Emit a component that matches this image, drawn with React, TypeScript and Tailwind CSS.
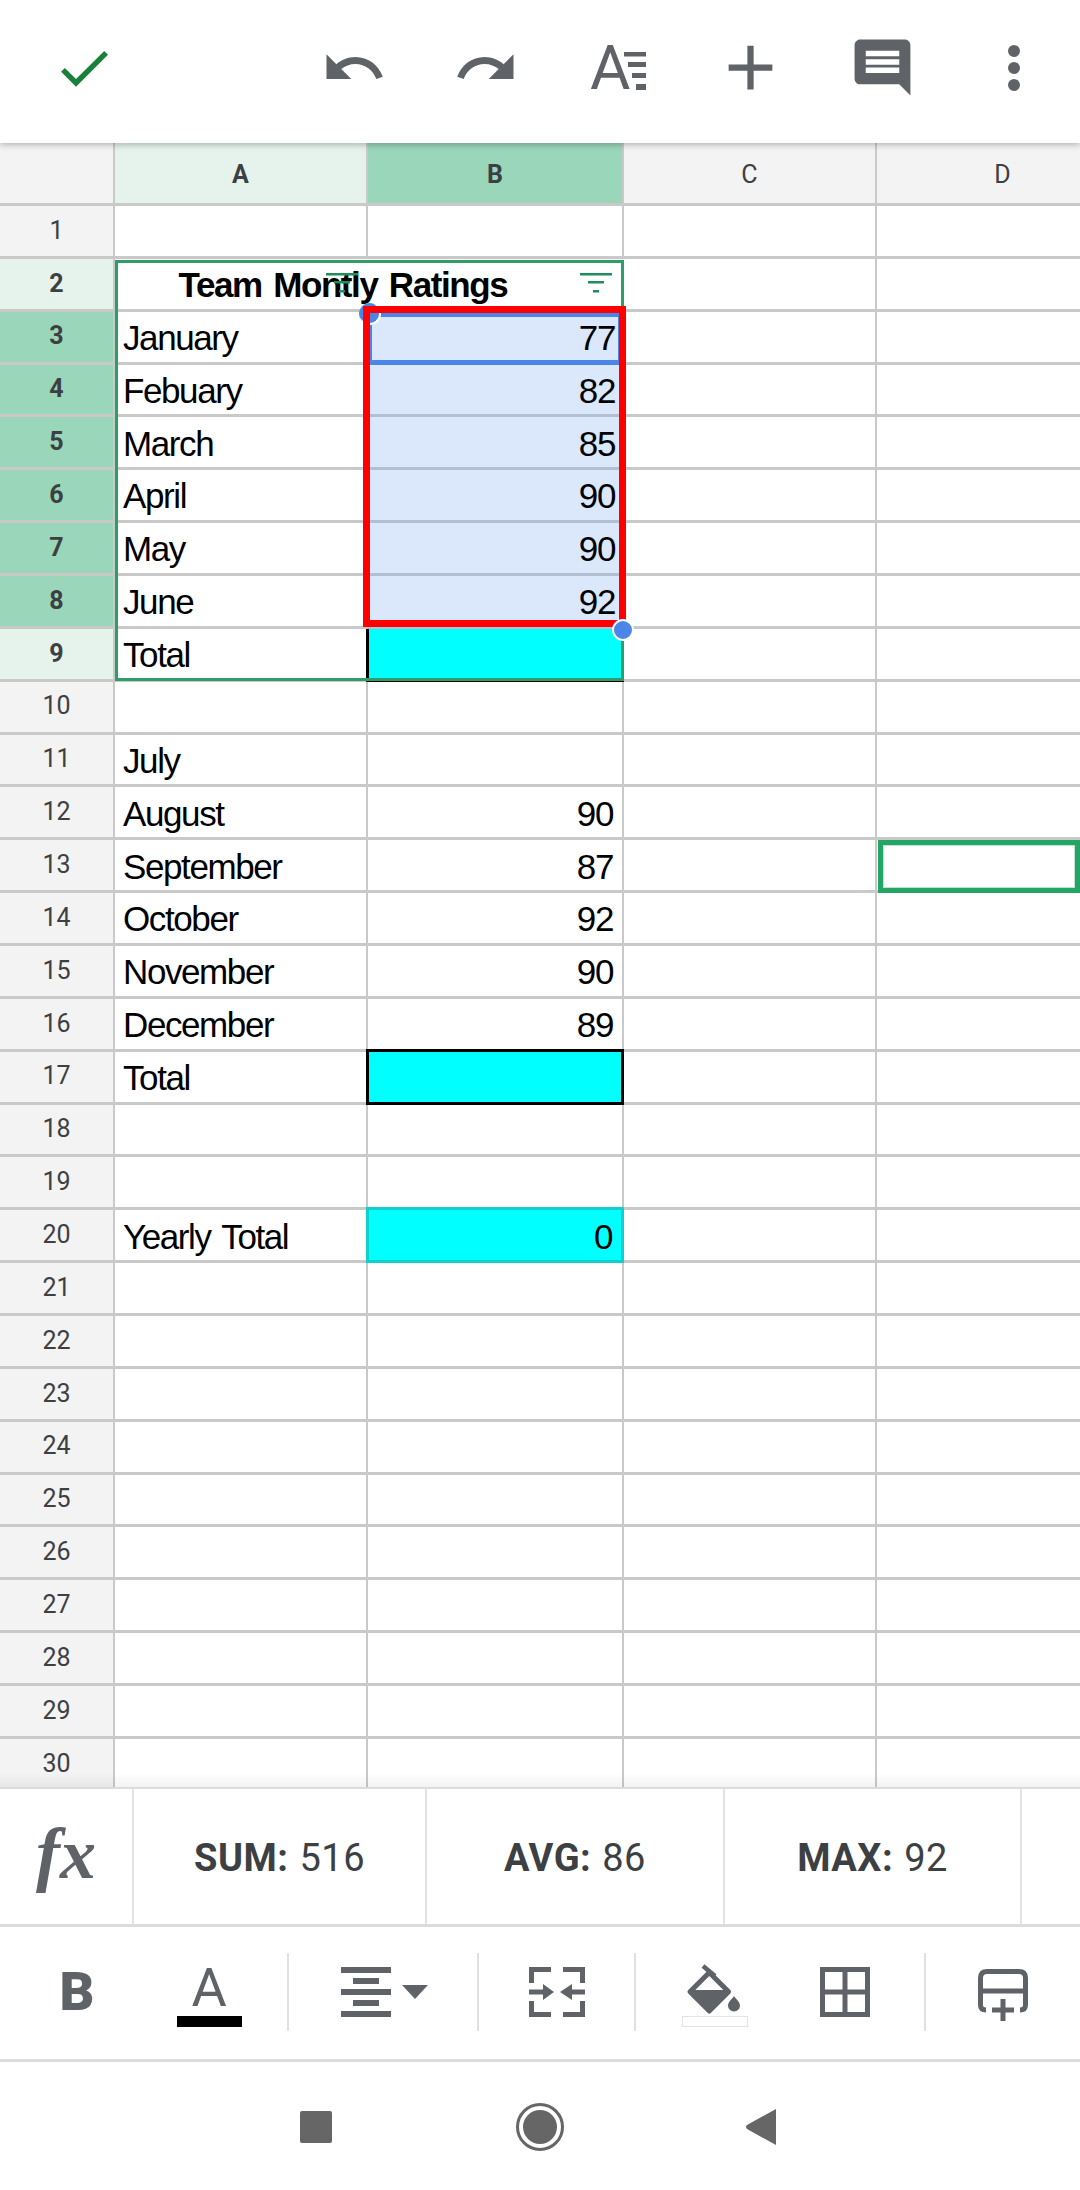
import React from "react";

type RowData = {
  n: number;
  label?: string;
  value?: string;
  head?: "light" | "dark";
  b?: "sel" | "black" | "blackOpen" | "teal";
};

const months: Record<number, Partial<RowData>> = {
  2: { head: "light" },
  3: { label: "January", value: "77", head: "dark", b: "sel" },
  4: { label: "Febuary", value: "82", head: "dark", b: "sel" },
  5: { label: "March", value: "85", head: "dark", b: "sel" },
  6: { label: "April", value: "90", head: "dark", b: "sel" },
  7: { label: "May", value: "90", head: "dark", b: "sel" },
  8: { label: "June", value: "92", head: "dark", b: "sel" },
  9: { label: "Total", head: "light", b: "blackOpen" },
  11: { label: "July" },
  12: { label: "August", value: "90" },
  13: { label: "September", value: "87" },
  14: { label: "October", value: "92" },
  15: { label: "November", value: "90" },
  16: { label: "December", value: "89" },
  17: { label: "Total", b: "black" },
  20: { label: "Yearly Total", value: "0", b: "teal" },
};

const rows: RowData[] = Array.from({ length: 30 }, (_, i) => ({ n: i + 1, ...months[i + 1] }));

const cellFont = "font-['Liberation_Sans',Arial,sans-serif] text-[35px] tracking-[-1.4px] [word-spacing:3px] text-black";

function FilterIcon() {
  return (
    <svg width="32" height="22" viewBox="0 0 32 22" fill="#1e8e5a">
      <rect x="0" y="0" width="32" height="2.5" />
      <rect x="8" y="8" width="16" height="2.5" />
      <rect x="13" y="17" width="6" height="2.5" />
    </svg>
  );
}

function IconPath({ d, size, fill = "#5f6368" }: { d: string; size: number; fill?: string }) {
  return (
    <svg width={size} height={size} viewBox="0 0 24 24" fill={fill}>
      <path d={d} />
    </svg>
  );
}

function TopBar() {
  const cell = "w-[132px] flex items-center justify-center";
  return (
    <div className="relative z-20 h-[143px] bg-white flex items-center pb-[8px] shadow-[0_2px_6px_rgba(0,0,0,0.25)]">
      <div className="ml-[52px]">
        <IconPath size={64} fill="#188038" d="M9 16.17L4.83 12l-1.42 1.41L9 19 21 7l-1.41-1.41z" />
      </div>
      <div className="ml-auto flex items-center">
        <div className={cell}>
          <IconPath size={66} d="M12.5 8c-2.65 0-5.05.99-6.9 2.6L2 7v9h9l-3.62-3.62c1.39-1.16 3.16-1.88 5.12-1.88 3.54 0 6.55 2.31 7.6 5.5l2.37-.78C21.08 11.03 17.15 8 12.5 8z" />
        </div>
        <div className={cell}>
          <IconPath size={66} d="M18.4 10.6C16.55 8.99 14.15 8 11.5 8c-4.65 0-8.58 3.03-9.96 7.22L3.9 16c1.05-3.19 4.05-5.5 7.6-5.5 1.95 0 3.73.72 5.12 1.88L13 16h9V7l-3.6 3.6z" />
        </div>
        <div className={cell}>
          <div className="relative w-[56px] h-[44px]">
            <span className="block font-['Roboto',sans-serif] text-[62px] leading-[44px] text-[#5f6368]">A</span>
            <svg className="absolute left-0 top-0" width="56" height="44" viewBox="0 0 56 44" fill="#5f6368">
              <rect x="34" y="6" width="22" height="4.5" />
              <rect x="38" y="16" width="18" height="5" />
              <rect x="42" y="27" width="14" height="5" />
              <rect x="46" y="38" width="10" height="6" />
            </svg>
          </div>
        </div>
        <div className={cell}>
          <IconPath size={75} d="M19 13h-6v6h-2v-6H5v-2h6V5h2v6h6v2z" />
        </div>
        <div className={cell}>
          <IconPath size={67} d="M21.99 4c0-1.1-.89-2-1.99-2H4c-1.1 0-2 .9-2 2v12c0 1.1.9 2 2 2h14l4 4-.01-18zM18 14H6v-2h12v2zm0-3H6V9h12v2zm0-3H6V6h12v2z" />
        </div>
        <div className={cell}>
          <svg width="14" height="46" viewBox="0 0 14 46" fill="#5f6368">
            <circle cx="7" cy="6" r="6" />
            <circle cx="7" cy="23" r="6" />
            <circle cx="7" cy="40" r="6" />
          </svg>
        </div>
      </div>
    </div>
  );
}

function ColHeader() {
  const base = "h-full flex items-center justify-center border-b-[3px] border-r-2 border-[#c9c9c9] font-['Roboto',sans-serif] text-[25px] pt-[4px] text-[#3c4043]";
  return (
    <div className="h-[63px] w-[1130px] flex bg-[#f3f3f3]">
      <div className={`${base} w-[115px]`} />
      <div className={`${base} w-[253px] bg-[#e5f3ec] font-bold`}>A</div>
      <div className={`${base} w-[256px] bg-[#9ad6b9] font-bold`}>B</div>
      <div className={`${base} w-[253px]`}>C</div>
      <div className={`${base} w-[253px] border-r-0`}>D</div>
    </div>
  );
}

function Row({ row }: { row: RowData }) {
  const line = "border-b-[3px] border-[#c9c9c9]";
  const headBg = row.head === "dark" ? "bg-[#9ad6b9] font-bold" : row.head === "light" ? "bg-[#e5f3ec] font-bold" : "bg-[#f3f3f3]";
  let bCell = "w-[256px] bg-white border-r-2 border-[#c9c9c9] " + line;
  if (row.b === "sel") bCell = "w-[256px] bg-[#dbe7fb] border-b-[3px] border-[#b3bfd3]";
  if (row.b === "black") bCell = "w-[258px] -ml-[2px] bg-[#00ffff] border-[3px] border-black -mt-[3px] h-[calc(100%+3px)]";
  if (row.b === "blackOpen") bCell = "w-[258px] -ml-[2px] bg-[#00ffff] border-l-[3px] border-b-[3px] border-black";
  if (row.b === "teal") bCell = "w-[258px] -ml-[2px] bg-[#00ffff] border-[3px] border-[#12cfcf] -mt-[3px] h-[calc(100%+3px)]";

  return (
    <div className="h-[52.87px] w-[1130px] flex">
      <div className={`w-[115px] flex items-center justify-center border-r-2 border-[#c9c9c9] font-['Roboto',sans-serif] text-[25px] text-[#3c4043] pb-[1px] ${line} ${headBg}`}>
        {row.n}
      </div>
      {row.n === 2 ? (
        <div className={`w-[509px] relative flex items-center justify-center font-bold ${cellFont} ${line}`}>
          <span className="mr-[53px] pt-[2px]">Team Montly Ratings</span>
          <div className="absolute left-[211px] top-[14px]"><FilterIcon /></div>
          <div className="absolute left-[465px] top-[14px]"><FilterIcon /></div>
        </div>
      ) : (
        <>
          <div className={`w-[253px] flex items-center pl-[8px] pt-[3px] border-r-2 border-[#c9c9c9] ${cellFont} ${line}`}>
            {row.label}
          </div>
          <div className={`flex items-center justify-end pr-[9px] pt-[3px] ${cellFont} tracking-[-0.8px] ${bCell}`}>
            {row.value}
          </div>
        </>
      )}
      <div className={`w-[253px] border-r-2 border-[#c9c9c9] ${line}`} />
      <div className={`w-[253px] ${line}`} />
    </div>
  );
}

function Sheet() {
  return (
    <div className="relative h-[1644px] overflow-hidden bg-white">
      <ColHeader />
      {rows.map((r) => (
        <Row key={r.n} row={r} />
      ))}

      {/* selection and outlines over the grid */}
      <div className="absolute left-[115px] top-[117px] w-[509px] h-[421px] border-[3px] border-[#2e9e68] pointer-events-none" />
      <div className="absolute left-[367px] top-[169px] w-[256px] h-[53px] border-[5px] border-[#4a86e8]" />
      <div className="absolute left-[359px] top-[160px] w-[22px] h-[22px] rounded-full bg-[#4a86e8] border-r-2 border-b-2 border-white" />
      <div className="absolute left-[363px] top-[163px] w-[263px] h-[321px] border-[7px] border-[#ff0000]" />
      <div className="absolute left-[612px] top-[476px] w-[22px] h-[22px] rounded-full bg-[#4a86e8] border-2 border-white" />
      <div className="absolute left-[878px] top-[697px] w-[202px] h-[53px] border-[5px] border-[#22a565] outline outline-1 -outline-offset-6 outline-[#bfe5d0]" />

      <div className="absolute left-0 right-0 bottom-0 h-[14px] bg-gradient-to-b from-transparent to-black/5" />
    </div>
  );
}

function StatCell({ name, value, width }: { name: string; value: string; width: string }) {
  return (
    <div className={`${width} h-full flex items-center justify-center border-r-2 border-[#e3e3e3] font-['Roboto',sans-serif] text-[38px] tracking-[0.5px] text-[#3c4043] pt-[3px]`}>
      <span className="font-bold">{name}:</span>
      <span className="ml-[11px]">{value}</span>
    </div>
  );
}

function StatStrip() {
  return (
    <div className="h-[140px] flex bg-white border-t-2 border-b-[3px] border-[#dcdce0]">
      <div className="w-[134px] h-full flex items-center justify-center border-r-2 border-[#e3e3e3] font-['Liberation_Serif',serif] italic font-bold text-[72px] text-[#5f6368] pb-[6px]">
        fx
      </div>
      <StatCell name="SUM" value="516" width="w-[293px]" />
      <StatCell name="AVG" value="86" width="w-[298px]" />
      <StatCell name="MAX" value="92" width="w-[297px]" />
    </div>
  );
}

function Divider() {
  return <div className="w-[2px] h-[78px] bg-[#e0e0e0]" />;
}

function FormatBar() {
  return (
    <div className="h-[135px] flex items-center bg-white border-b-[3px] border-[#dcdce0] pb-[3px]">
      <div className="w-[154px] flex justify-center font-['Roboto',sans-serif] font-black text-[54px] leading-none text-[#5f6368]">B</div>
      <div className="w-[110px] flex flex-col items-center pt-[6px]">
        <span className="font-['Roboto',sans-serif] text-[54px] leading-[50px] text-[#5f6368]">A</span>
        <div className="w-[65px] h-[11px] bg-black mt-[3px]" />
      </div>
      <div className="w-[23px]" />
      <Divider />
      <div className="w-[188px] flex items-center justify-center gap-[11px] pl-[2px]">
        <svg width="50" height="50" viewBox="0 0 50 50" fill="#5f6368">
          <rect x="0" y="0" width="50" height="6" />
          <rect x="12" y="11" width="26" height="6" />
          <rect x="0" y="22" width="50" height="6" />
          <rect x="12" y="33" width="26" height="6" />
          <rect x="0" y="44" width="50" height="6" />
        </svg>
        <svg width="26" height="14" viewBox="0 0 26 14" fill="#5f6368">
          <path d="M0 0h26L13 14z" />
        </svg>
      </div>
      <Divider />
      <div className="w-[155px] flex justify-center">
        <svg width="56" height="50" viewBox="0 0 56 50" fill="#5f6368">
          <path d="M0 0h22v5H5v11H0zM34 0h22v16h-5V5H34zM0 34h5v11h17v5H0zM51 34h5v16H34v-5h17z" />
          <path d="M0 22.5h14V17l11 8-11 8v-5.5H0zM56 22.5H43V17l-12 8 12 8v-5.5h13z" />
        </svg>
      </div>
      <Divider />
      <div className="w-[288px] flex items-center">
        <div className="w-[158px] flex justify-center pt-[3px]">
          <svg width="66" height="67" viewBox="0 0 66 67" fill="#5f6368">
            <path d="M8 31.7L27.3 12.4 46.6 31.7 27.3 51z" fill="none" stroke="#5f6368" strokeWidth="5" strokeLinejoin="round" />
            <path d="M8 31h38.6L27.3 51z" stroke="#5f6368" strokeWidth="2" strokeLinejoin="round" />
            <path d="M21 6l12 10" fill="none" stroke="#5f6368" strokeWidth="4.5" />
            <path d="M52 36c2 3 6 6 6 9.5a6 6 0 0 1-12 0c0-3.5 4-6.5 6-9.5z" />
            <rect x="0.5" y="56.5" width="65" height="10" fill="none" stroke="#e3e3e3" />
          </svg>
        </div>
        <div className="w-[102px] flex justify-center">
          <svg width="50" height="50" viewBox="0 0 50 50" fill="none" stroke="#5f6368" strokeWidth="5">
            <path d="M2.5 2.5h45v45h-45zM25 2.5v45M2.5 25h45" />
          </svg>
        </div>
      </div>
      <Divider />
      <div className="flex-1 flex justify-center pt-[6px]">
        <svg width="50" height="52" viewBox="0 0 50 52" fill="none" stroke="#5f6368" strokeWidth="5">
          <path d="M8 41q-5.5 0-5.5-5V9q0-6.5 6.5-6.5h32q6.5 0 6.5 6.5v27q0 5-5.5 5" />
          <path d="M2.5 22h45" />
          <path d="M25 30v22M14 41h22" />
        </svg>
      </div>
    </div>
  );
}

function NavBar() {
  return (
    <div className="h-[128px] relative flex items-center justify-center bg-white">
      <div className="flex items-center pt-[2px] -ml-[4px]">
        <div className="w-[32px] h-[32px] rounded-[2px] bg-[#666666]" />
        <div className="ml-[184px] w-[48px] h-[48px] rounded-full border-[3px] border-[#666666] flex items-center justify-center">
          <div className="w-[34px] h-[34px] rounded-full bg-[#666666]" />
        </div>
        <svg className="ml-[181px]" width="31" height="36" viewBox="0 0 31 36" fill="#666666">
          <path d="M31 0v36L2 20q-2-2 0-4z" />
        </svg>
      </div>
    </div>
  );
}

export default function App() {
  return (
    <div className="w-[1080px] h-[2190px] overflow-hidden bg-white">
      <TopBar />
      <Sheet />
      <StatStrip />
      <FormatBar />
      <NavBar />
    </div>
  );
}
